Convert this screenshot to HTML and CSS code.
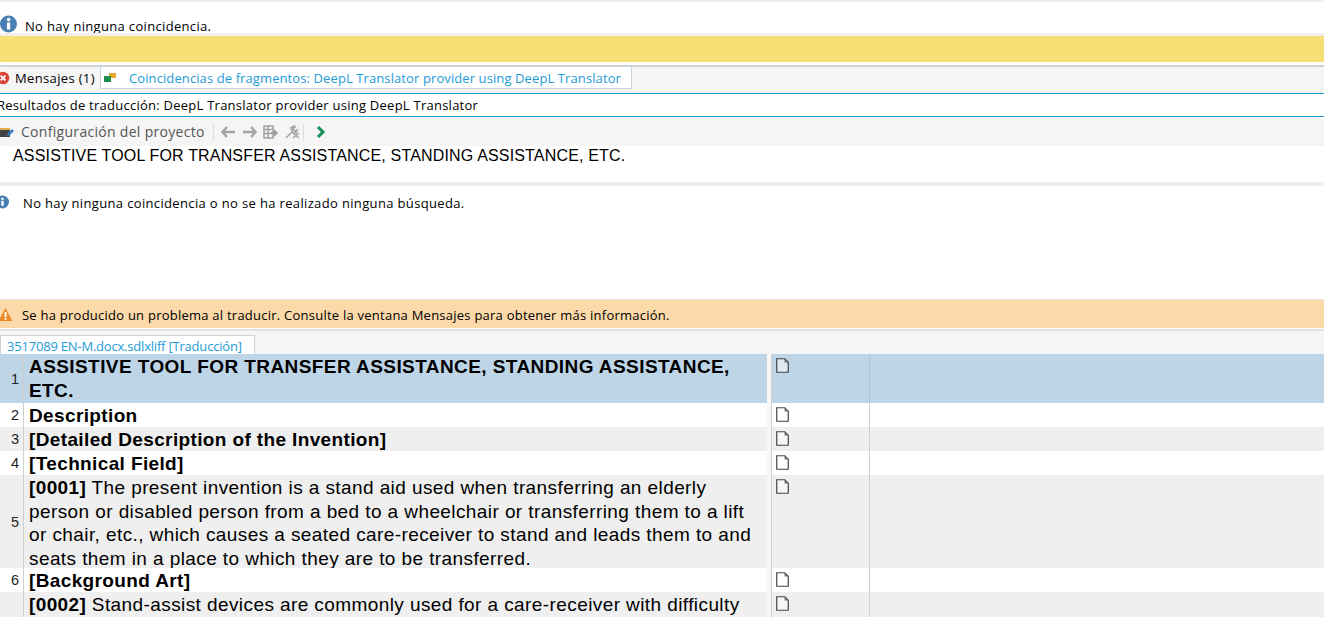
FILE: index.html
```html
<!DOCTYPE html>
<html lang="es">
<head>
<meta charset="utf-8">
<title>Trados</title>
<link rel="stylesheet" href="styles.css">
</head>
<body>
<div class="page">
  <section class="notice">
    <svg class="notice-icon" width="18" height="18" viewBox="0 0 18 18"><circle cx="8.500" cy="9" r="8.500" fill="#4a7fb5"/><rect x="7" y="7.500" width="3.200" height="7" fill="#fff"/><circle cx="8.600" cy="4.600" r="1.800" fill="#fff"/></svg>
    <span class="notice-text">No hay ninguna coincidencia.</span>
  </section>
  <div class="sep-light"></div>
  <div class="yellow"></div>
  <nav class="tabs-top">
    <div class="tab tab-msg">
      <svg width="12" height="14" viewBox="0 0 12 14"><circle cx="3" cy="7" r="6.300" fill="#d9453a"/><path d="M.6 4.600l4.800 4.800M5.400 4.600l-4.800 4.800" stroke="#fff" stroke-width="1.800"/></svg>
      <span>Mensajes (1)</span>
    </div>
    <div class="tab tab-match">
      <svg width="14" height="12" viewBox="0 0 14 12"><rect x="6" y="1" width="7" height="5" fill="#e3a92f"/><rect x="1" y="4" width="7" height="6" fill="#1f8f4d"/></svg>
      <span>Coincidencias de fragmentos: DeepL Translator provider using DeepL Translator</span>
    </div>
  </nav>
  <div class="results-title">Resultados de traducción: DeepL Translator provider using DeepL Translator</div>
  <div class="toolbar">
    <svg class="tb-first" width="14" height="14" viewBox="0 0 14 14"><path d="M0 5h10v7H0z" fill="#444"/><path d="M0 3h10v2H0z" fill="#e0b050"/><path d="M7 11l1-3 4-4 2 2-4 4z" fill="#3b80c4"/></svg>
    <span class="tb-label">Configuración del proyecto</span>
    <i class="tb-sep"></i>
    <svg class="tb-back" width="15" height="12" viewBox="0 0 15 12"><path d="M6 1L1.500 6 6 11M2 6h12" fill="none" stroke="#a3a3a3" stroke-width="2.400"/></svg>
    <svg width="15" height="12" viewBox="0 0 15 12"><path d="M9 1l4.500 5L9 11M13 6H1" fill="none" stroke="#a3a3a3" stroke-width="2.400"/></svg>
    <svg width="15" height="14" viewBox="0 0 15 14"><path d="M1 1h9v12H1zM1 4.500h9M1 8.500h9M5 1v12" fill="none" stroke="#a3a3a3" stroke-width="1.500"/><path d="M8 7h3V4l4 4-4 4V9H8z" fill="#9a9a9a"/></svg>
    <svg class="tb-tools" width="15" height="14" viewBox="0 0 15 14"><path d="M1 13l6-6M6 3l3-2 1 1-2 2 2 2 2-1-1 3-3 0z" fill="none" stroke="#a3a3a3" stroke-width="1.600"/><path d="M8 8l6 5M14 8l-6 5" stroke="#a3a3a3" stroke-width="1.600"/></svg>
    <i class="tb-sep tb-sep-tight"></i>
    <svg class="tb-next" width="10" height="12" viewBox="0 0 10 12"><path d="M2 1l5 5-5 5" fill="none" stroke="#16905a" stroke-width="3"/></svg>
  </div>
  <div class="source-line">ASSISTIVE TOOL FOR TRANSFER ASSISTANCE, STANDING ASSISTANCE, ETC.</div>
  <div class="sep-gray"></div>
  <section class="no-match">
    <svg width="12" height="14" viewBox="0 0 12 14"><circle cx="2.500" cy="7" r="6.500" fill="#4a7fb5"/><rect x="1.300" y="5.800" width="2.400" height="5" fill="#fff"/><rect x="1.300" y="2.800" width="2.400" height="2" fill="#fff"/></svg>
    <span>No hay ninguna coincidencia o no se ha realizado ninguna búsqueda.</span>
  </section>
  <div class="warning">
    <svg width="14" height="14" viewBox="0 0 14 14"><path d="M5.500 0L12.500 13H-1.500z" fill="#ec8a2a"/><rect x="4.600" y="4" width="1.900" height="5" fill="#fff"/><rect x="4.600" y="10" width="1.900" height="1.800" fill="#fff"/></svg>
    <span>Se ha producido un problema al traducir. Consulte la ventana Mensajes para obtener más información.</span>
  </div>
  <div class="doc-tabs">
    <div class="doc-tab">3517089 EN-M.docx.sdlxliff [Traducción]</div>
  </div>
  <div class="grid">
    <div class="row row-active row-h49">
      <div class="num">1</div>
      <div class="src"><b>ASSISTIVE TOOL FOR TRANSFER ASSISTANCE, STANDING ASSISTANCE, ETC.</b></div>
      <div class="gutter"></div>
      <div class="status"><svg class="doc" viewBox="0 0 13 15"><path d="M.75.75h8l3.500 3.500v10h-11.500z" fill="#dde9f3" stroke="#444" stroke-width="1.200"/><path d="M8.500 1v3.500h3.500z" fill="#777"/></svg></div>
      <div class="rest"></div>
    </div>
    <div class="row row-h24">
      <div class="num">2</div>
      <div class="src"><b>Description</b></div>
      <div class="gutter"></div>
      <div class="status"><svg class="doc" viewBox="0 0 13 15"><path d="M.75.75h8l3.500 3.500v10h-11.500z" fill="#fff" stroke="#444" stroke-width="1.200"/><path d="M8.500 1v3.500h3.500z" fill="#777"/></svg></div>
      <div class="rest"></div>
    </div>
    <div class="row row-alt row-h24">
      <div class="num">3</div>
      <div class="src"><b>[Detailed Description of the Invention]</b></div>
      <div class="gutter"></div>
      <div class="status"><svg class="doc" viewBox="0 0 13 15"><path d="M.75.75h8l3.500 3.500v10h-11.500z" fill="#f7f7f7" stroke="#444" stroke-width="1.200"/><path d="M8.500 1v3.500h3.500z" fill="#777"/></svg></div>
      <div class="rest"></div>
    </div>
    <div class="row row-h24">
      <div class="num">4</div>
      <div class="src"><b>[Technical Field]</b></div>
      <div class="gutter"></div>
      <div class="status"><svg class="doc" viewBox="0 0 13 15"><path d="M.75.75h8l3.500 3.500v10h-11.500z" fill="#fff" stroke="#444" stroke-width="1.200"/><path d="M8.500 1v3.500h3.500z" fill="#777"/></svg></div>
      <div class="rest"></div>
    </div>
    <div class="row row-alt row-h93">
      <div class="num">5</div>
      <div class="src"><b>[0001]</b> The present invention is a stand aid used when transferring an elderly person or disabled person from a bed to a wheelchair or transferring them to a lift or chair, etc., which causes a seated care-receiver to stand and leads them to and seats them in a place to which they are to be transferred.</div>
      <div class="gutter"></div>
      <div class="status"><svg class="doc" viewBox="0 0 13 15"><path d="M.75.75h8l3.500 3.500v10h-11.500z" fill="#f7f7f7" stroke="#444" stroke-width="1.200"/><path d="M8.500 1v3.500h3.500z" fill="#777"/></svg></div>
      <div class="rest"></div>
    </div>
    <div class="row row-h24">
      <div class="num">6</div>
      <div class="src"><b>[Background Art]</b></div>
      <div class="gutter"></div>
      <div class="status"><svg class="doc" viewBox="0 0 13 15"><path d="M.75.75h8l3.500 3.500v10h-11.500z" fill="#fff" stroke="#444" stroke-width="1.200"/><path d="M8.500 1v3.500h3.500z" fill="#777"/></svg></div>
      <div class="rest"></div>
    </div>
    <div class="row row-alt row-h93">
      <div class="num"></div>
      <div class="src"><b>[0002]</b> Stand-assist devices are commonly used for a care-receiver with difficulty</div>
      <div class="gutter"></div>
      <div class="status"><svg class="doc" viewBox="0 0 13 15"><path d="M.75.75h8l3.500 3.500v10h-11.500z" fill="#f7f7f7" stroke="#444" stroke-width="1.200"/><path d="M8.500 1v3.500h3.500z" fill="#777"/></svg></div>
      <div class="rest"></div>
    </div>
  </div>
</div>
</body>
</html>
```
FILE: styles.css
```css
* { box-sizing: border-box; }
html, body { margin: 0; padding: 0; height: 100%; overflow: hidden; background: #fff; }
.page { width: 1324px; height: 617px; overflow: hidden; font-family: "Open Sans", "Noto Sans", sans-serif; font-size: 13px; color: #000; }
svg { flex: none; display: block; }

.notice { height: 33px; border-top: 2px solid #f0f0f0; display: flex; align-items: flex-start; overflow: hidden; padding-top: 13px; }
.notice-icon { margin-right: 7px; }
.notice-text { line-height: 20px; margin-top: 1px; letter-spacing: .33px; }
.sep-light { height: 3px; background: #f0f0f0; }
.yellow { height: 26px; background: #f7df75; }

.tabs-top { margin-top: 3px; height: 28px; border-top: 2px solid #ccd3da; background: #f5f5f5; display: flex; align-items: flex-start; }
.tab { height: 22px; display: flex; align-items: center; white-space: nowrap; }
.tab-msg { width: 100px; gap: 3px; background: #f5f5f5; letter-spacing: .35px; }
.tab-match { width: 532px; background: #fff; border: 1px solid #ccd3da; border-top: 0; color: #1e9bd8; gap: 12px; padding-left: 2px; letter-spacing: .1px; }

.results-title { height: 24px; border-top: 1px solid #1d9ad6; border-bottom: 1px solid #1d9ad6; line-height: 22px; margin-left: -3px; white-space: nowrap; letter-spacing: .25px; }
.toolbar { height: 29px; background: #f5f5f5; display: flex; align-items: center; gap: 6px; }
.tb-first { margin-right: 1px; }
.tb-label { color: #555; font-size: 14px; letter-spacing: .3px; }
.tb-sep { width: 1px; height: 16px; background: #ddd; margin: 0 2px; }
.tb-back { margin-left: -1px; }
.tb-tools { margin-left: 1px; }
.tb-sep-tight { margin-left: -3px; }
.tb-next { margin-left: 4px; }

.source-line { height: 36px; padding-left: 13px; font-family: "Liberation Sans", Arial, sans-serif; font-size: 16px; line-height: 19px; letter-spacing: .17px; }
.sep-gray { height: 4px; background: #f0f0f0; }
.no-match { height: 113px; display: flex; align-items: flex-start; padding-top: 9px; gap: 11px; }
.no-match span { line-height: 17px; letter-spacing: .35px; }
.warning { height: 29px; background: #fcd9a9; display: flex; align-items: center; gap: 8px; border-top: 1px solid #e8e3da; padding-top: 1px; }
.warning span { letter-spacing: .24px; }
.doc-tabs { height: 25px; border-top: 2px solid #e2e2e2; margin-top: 1px; padding-top: 4px; background: #f5f5f5; }
.doc-tab { width: 255px; height: 19px; background: #fff; border: 1px solid #ccd3da; border-bottom: 0; color: #1e9bd8; padding-left: 6px; line-height: 20px; letter-spacing: -.2px; white-space: nowrap; }

.grid { font-family: "Liberation Sans", Arial, sans-serif; font-size: 19px; color: #000; }
.row { display: flex; overflow: hidden; background: #fff; }
.row-alt { background: #efefef; }
.row-active { background: #bdd5e7; }
.row-h24 { height: 24px; }
.row-h49 { height: 49px; }
.row-h93 { height: 93px; }
.num { width: 24px; flex: none; border-right: 1px solid #cfcfcf; display: flex; align-items: center; justify-content: flex-end; padding-right: 4px; font-size: 14.500px; color: #222; }
.src { width: 743px; flex: none; padding: 1px 8px 0 5px; line-height: 23.300px; letter-spacing: .41px; }
.src b { line-height: 24px; letter-spacing: .37px; }
.row-active .src b { letter-spacing: .42px; }
.gutter { width: 5px; flex: none; background: #f7f7f7; border-right: 1px solid #cfcfcf; }
.status { width: 98px; flex: none; border-right: 1px solid #cfcfcf; padding: 4px 0 0 4px; }
.row-active .status { border-right-color: #b3c4d2; }
.doc { width: 13px; height: 15px; }
.rest { flex: 1; }
```
